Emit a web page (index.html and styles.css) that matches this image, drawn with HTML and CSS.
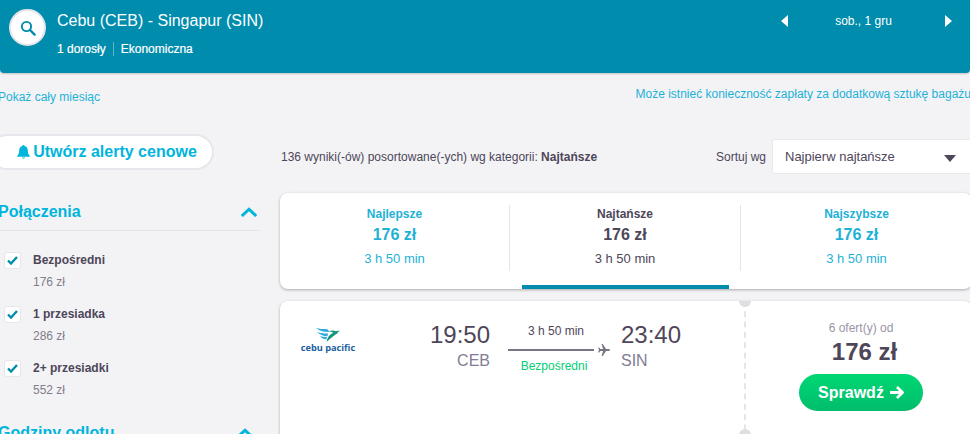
FILE: index.html
```html
<!DOCTYPE html>
<html lang="pl">
<head>
    <meta charset="UTF-8">
    <meta name="viewport" content="width=device-width, initial-scale=1.0">
    <title>Cebu (CEB) - Singapur (SIN)</title>
    <link rel="stylesheet" href="styles.css">
</head>
<body>
    <header class="topbar">
        <button class="search-btn" aria-label="Szukaj">
            <svg width="16" height="16" viewBox="0 0 16 16" fill="none" stroke="#008cad" stroke-width="1.9">
                <circle cx="6.5" cy="6.5" r="4.6"/>
                <path d="M10 10l4.6 4.6" stroke-width="2.4" stroke-linecap="round"/>
            </svg>
        </button>
        <div class="route">
            <div class="route-title">Cebu (CEB) - Singapur (SIN)</div>
            <div class="route-sub"><span>1 dorosły</span><span class="route-class">Ekonomiczna</span></div>
        </div>
        <div class="date-nav">
            <svg width="7" height="12" viewBox="0 0 7 12"><path d="M7 0v12L0 6z" fill="#fff"/></svg>
            <span class="date-label">sob., 1 gru</span>
            <svg width="7" height="12" viewBox="0 0 7 12"><path d="M0 0v12l7-6z" fill="#fff"/></svg>
        </div>
    </header>

    <div class="links">
        <a class="link-month">Pokaż cały miesiąc</a>
        <a class="link-bag">Może istnieć konieczność zapłaty za dodatkową sztukę bagażu</a>
    </div>

    <div class="layout">
        <aside class="sidebar">
            <button class="alert-btn">
                <svg width="13" height="14" viewBox="0 0 13 14" fill="#00b5dc">
                    <path d="M6.5 0C5.8 0 5.4.5 5.4 1.1 3.4 1.6 2.2 3.2 2.2 5.3c0 3-.7 4.3-2 5.500v.9h12.600v-.9c-1.300-1.200-2-2.500-2-5.500 0-2.100-1.200-3.700-3.200-4.200C7.600.5 7.200 0 6.500 0z"/>
                    <path d="M4.800 12.400a1.800 1.600 0 0 0 3.400 0z"/>
                </svg>
                Utwórz alerty cenowe
            </button>

            <div class="filter-head">
                <span class="filter-title">Połączenia</span>
                <svg width="16" height="10" viewBox="0 0 16 10" fill="none" stroke="#00b5dc" stroke-width="3"><path d="M.8 9L8 2.200 15.200 9"/></svg>
            </div>
            <div class="filter-item">
                <span class="check"><svg width="11" height="9" viewBox="0 0 11 9" fill="none" stroke="#008cad" stroke-width="2.400"><path d="M1 4.500l3 3L10 1"/></svg></span>
                <div><div class="filter-name">Bezpośredni</div><div class="filter-price">176 zł</div></div>
            </div>
            <div class="filter-item">
                <span class="check"><svg width="11" height="9" viewBox="0 0 11 9" fill="none" stroke="#008cad" stroke-width="2.400"><path d="M1 4.500l3 3L10 1"/></svg></span>
                <div><div class="filter-name">1 przesiadka</div><div class="filter-price">286 zł</div></div>
            </div>
            <div class="filter-item">
                <span class="check"><svg width="11" height="9" viewBox="0 0 11 9" fill="none" stroke="#008cad" stroke-width="2.400"><path d="M1 4.500l3 3L10 1"/></svg></span>
                <div><div class="filter-name">2+ przesiadki</div><div class="filter-price">552 zł</div></div>
            </div>

            <div class="filter-head filter-next">
                <span class="filter-title">Godziny odlotu</span>
                <svg width="16" height="10" viewBox="0 0 16 10" fill="none" stroke="#00b5dc" stroke-width="3"><path d="M.8 9L8 2.200 15.200 9"/></svg>
            </div>
        </aside>

        <main class="results">
            <div class="sort-row">
                <div class="sort-info">136 wyniki(-ów) posortowane(-ych) wg kategorii: <b>Najtańsze</b></div>
                <div class="sort-by">Sortuj wg</div>
                <div class="sort-select">
                    Najpierw najtańsze
                    <span class="caret"></span>
                </div>
            </div>

            <div class="tabs">
                <div class="tab tab-blue tab-first">
                    <div class="tab-name">Najlepsze</div>
                    <div class="tab-price">176 zł</div>
                    <div class="tab-time">3 h 50 min</div>
                </div>
                <div class="tab tab-active">
                    <div class="tab-name">Najtańsze</div>
                    <div class="tab-price">176 zł</div>
                    <div class="tab-time">3 h 50 min</div>
                </div>
                <div class="tab tab-blue">
                    <div class="tab-name">Najszybsze</div>
                    <div class="tab-price">176 zł</div>
                    <div class="tab-time">3 h 50 min</div>
                </div>
            </div>

            <div class="flight">
                <div class="flight-info">
                    <div class="airline">
                        <svg width="24" height="14" viewBox="0 0 24 14">
                            <path d="M0 0c3 .8 7 1.200 11.500 1.200L13.500 4C8.500 4.300 3 3 0 0zM1 4c3 1 7 1.500 11 1.500l-.5 2.700C7.500 8.300 3.500 6.500 1 4zM4 8.300c2.300.6 4.700.9 7 .8l-.8 2.400C8 11.300 5.500 10 4 8.300z" fill="#2eaade"/>
                            <path d="M10.500 14c.6-4.500 3.200-7.800 6.800-9.300-1.300-.9-3-1.400-4.800-1.500 2.800-1 5.800-.9 7.500.1 1-.7 2.500-.8 4-.2-1.200.4-2 1-2.500 2.100C18 7.500 14 10.500 10.500 14z" fill="#12957f"/>
                        </svg>
                        <span class="airline-name">cebu pacific</span>
                    </div>
                    <div class="stop-col stop-from">
                        <div class="stop-time">19:50</div>
                        <div class="stop-code">CEB</div>
                    </div>
                    <div class="path">
                        <div class="path-time">3 h 50 min</div>
                        <div class="path-line">
                            <span class="line"></span>
                            <svg width="12" height="12" viewBox="0 0 12 12" fill="#7a7585"><path d="M12 6c0-.6-.8-1-1.500-1H8L4.800 0H3.600l1.500 5H2.400L1.200 3.500H.2L1 6 .2 8.500h1L2.400 7h2.700l-1.500 5h1.200L8 7h2.500C11.200 7 12 6.600 12 6z"/></svg>
                        </div>
                        <div class="path-stops">Bezpośredni</div>
                    </div>
                    <div class="stop-col">
                        <div class="stop-time">23:40</div>
                        <div class="stop-code">SIN</div>
                    </div>
                </div>
                <div class="offer">
                    <span class="notch notch-top"></span>
                    <span class="notch notch-bottom"></span>
                    <div class="offer-count">6 ofert(y) od</div>
                    <div class="offer-price">176 zł</div>
                    <button class="check-btn">Sprawdź
                        <svg width="14" height="13" viewBox="0 0 14 13" fill="none" stroke="#fff" stroke-width="2.800"><path d="M0 6.500h12M7 1l5.500 5.500L7 12"/></svg>
                    </button>
                </div>
            </div>
        </main>
    </div>
</body>
</html>
```

FILE: styles.css
```css
html, body {
    height: 434px;
    overflow: hidden;
}
body {
    font-family: "Liberation Sans", Arial, sans-serif;
    background-color: #f3f3f6;
    color: #4e4659;
    margin: 0;
    padding: 0;
    font-size: 12px;
}
button {
    font-family: inherit;
    border: none;
    padding: 0;
}

/* top bar */
.topbar {
    display: flex;
    height: 73px;
    background-color: #008cad;
    border-radius: 0 0 4px 4px;
    box-shadow: 0 1px 2px rgba(0, 0, 0, 0.2);
    color: #fff;
}
.search-btn {
    display: flex;
    align-items: center;
    justify-content: center;
    width: 37px;
    height: 37px;
    margin: 9px 0 0 9px;
    background-color: #fff;
    border: 2px solid #e4e4ea;
    border-radius: 50%;
}
.route {
    margin-left: 12px;
    padding-top: 11px;
}
.route-title {
    font-size: 16px;
    line-height: 19px;
    margin-left: -1px;
}
.route-sub {
    display: flex;
    align-items: center;
    margin-top: 12px;
    margin-left: -1px;
    font-size: 12px;
    font-weight: 500;
    line-height: 14px;
    -webkit-text-stroke: 0.2px #fff;
}
.route-class {
    margin-left: 7px;
    padding-left: 7px;
    border-left: 1px solid #5fb5ca;
}
.date-nav {
    display: flex;
    align-items: center;
    height: 12px;
    margin: 15px 0 0 auto;
    padding-right: 18px;
}
.date-label {
    width: 59px;
    margin: 0 52px 0 46px;
    text-align: center;
    font-size: 12px;
}

/* links under the bar */
.links {
    display: flex;
    justify-content: space-between;
    height: 61px;
    color: #1eb1d6;
    font-size: 12px;
}
.link-month {
    margin: 17px 0 0 -2px;
}
.link-bag {
    margin: 14px -1px 0 0;
    white-space: nowrap;
}

/* columns */
.layout {
    display: flex;
    width: 1000px;
}
.sidebar {
    width: 260px;
    flex: none;
}
.results {
    width: 700px;
    margin-left: 20px;
    padding-top: 5px;
    flex: none;
}

.alert-btn {
    display: flex;
    align-items: center;
    justify-content: center;
    gap: 3px;
    width: 225px;
    height: 36px;
    margin-left: -11px;
    padding-left: 11px;
    background-color: #fff;
    border: 2px solid #e6e6ec;
    border-radius: 18px;
    color: #00b5dc;
    font-size: 16px;
    font-weight: bold;
}

/* filters */
.filter-head {
    display: flex;
    align-items: center;
    justify-content: space-between;
    height: 37px;
    margin-top: 23px;
    margin-left: -2px;
    padding-right: 3px;
    border-bottom: 1px solid #e4e4e9;
}
.filter-title {
    color: #00b5dc;
    font-size: 16px;
    font-weight: bold;
}
.filter-next {
    margin-top: 21px;
    border: none;
    padding-right: 7px;
}
.filter-item {
    display: flex;
    margin-top: 21px;
    height: 33px;
}
.check {
    display: flex;
    align-items: center;
    justify-content: center;
    box-sizing: border-box;
    flex: none;
    width: 17px;
    height: 17px;
    margin-left: 4px;
    background-color: #fff;
    border: 1px solid #e6e6ec;
    border-radius: 3px;
}
.filter-name {
    margin-left: 12px;
    font-weight: bold;
    line-height: 16px;
}
.filter-price {
    margin: 6px 0 0 12px;
    color: #827d8c;
    line-height: 16px;
}

/* sort row */
.sort-row {
    display: flex;
    align-items: center;
    height: 35px;
}
.sort-info {
    width: 435px;
    margin-left: 1px;
    font-size: 12px;
}
.sort-by {
    width: 56px;
    font-size: 12px;
}
.sort-select {
    position: relative;
    box-sizing: border-box;
    width: 208px;
    height: 35px;
    padding-left: 12px;
    background-color: #fff;
    border: 1px solid #e8e8ed;
    border-radius: 3px;
    font-size: 13px;
    line-height: 33px;
}
.caret {
    position: absolute;
    left: 171px;
    top: 15px;
    border-left: 6.5px solid transparent;
    border-right: 6.5px solid transparent;
    border-top: 7px solid #4e4659;
}

/* tabs */
.tabs {
    display: flex;
    width: 692px;
    height: 96px;
    margin-top: 19px;
    background-color: #fff;
    border-radius: 8px;
    box-shadow: 0 1px 3px rgba(0, 0, 0, 0.3);
}
.tab {
    position: relative;
    width: 231px;
    text-align: center;
    padding-top: 14px;
}
.tab-first {
    width: 229px;
}
.tab-name {
    font-weight: bold;
    line-height: 14px;
}
.tab-price {
    margin-top: 4px;
    font-size: 16px;
    font-weight: bold;
    line-height: 19px;
}
.tab-time {
    margin-top: 7px;
    font-size: 13px;
    line-height: 15px;
}
.tab-blue {
    color: #1eb1d6;
}
.tab-active {
    width: 232px;
    color: #4e4659;
}
.tab-active::before,
.tab-active::after {
    content: "";
    position: absolute;
}
.tab-active::before {
    left: 0;
    right: 0;
    top: 12px;
    height: 66px;
    border-left: 1px solid #e4e4e9;
    border-right: 1px solid #e4e4e9;
}
.tab-active::after {
    left: 13px;
    right: 12px;
    bottom: 0;
    height: 4px;
    background-color: #008cad;
}

/* flight card */
.flight {
    display: flex;
    width: 692px;
    height: 150px;
    margin-top: 12px;
    background-color: #fff;
    border-radius: 8px;
    box-shadow: 0 1px 3px rgba(0, 0, 0, 0.3);
}
.flight-info {
    display: flex;
    width: 464px;
    flex: none;
    padding-top: 20px;
}
.airline {
    display: flex;
    flex-direction: column;
    align-items: center;
    width: 56px;
    margin-left: 20px;
    margin-top: 7px;
}
.airline-name {
    color: #1b5f9e;
    font-family: "Open Sans", sans-serif;
    font-size: 9.2px;
    font-weight: bold;
    line-height: 11px;
    white-space: nowrap;
}
.stop-col {
    width: 70px;
}
.stop-from {
    margin-left: 64px;
    text-align: right;
}
.stop-time {
    font-size: 24px;
    line-height: 28px;
}
.stop-code {
    margin-top: 2px;
    color: #827d94;
    font-size: 16px;
    line-height: 19px;
}
.path {
    width: 102px;
    margin: 3px 11px 0 18px;
    text-align: center;
}
.path-time {
    padding-right: 6px;
    line-height: 14px;
}
.path-line {
    display: flex;
    align-items: center;
    gap: 4px;
    margin-top: 6px;
}
.line {
    flex: 1;
    height: 2px;
    background-color: #7a7585;
}
.path-stops {
    margin-top: 3px;
    padding-right: 10px;
    color: #00cf75;
    line-height: 14px;
}
.offer {
    position: relative;
    flex: 1;
    display: flex;
    flex-direction: column;
    align-items: center;
    padding-top: 20px;
    padding-left: 4px;
    border-left: 2px dashed #e4e4ea;
}
.notch {
    position: absolute;
    left: -7px;
    width: 12px;
    background-color: #dedee3;
}
.notch-top {
    top: 0;
    height: 6px;
    border-radius: 0 0 6px 6px;
}
.notch-bottom {
    top: 128px;
    height: 12px;
    border-radius: 50%;
}
.offer-count {
    color: #9a95a5;
    line-height: 14px;
}
.offer-price {
    margin-top: 3px;
    margin-left: 7px;
    font-size: 24px;
    font-weight: bold;
    line-height: 28px;
}
.check-btn {
    display: flex;
    align-items: center;
    justify-content: center;
    gap: 6px;
    width: 124px;
    height: 37px;
    margin-top: 8px;
    background: linear-gradient(#00d773, #00bd6c);
    border-radius: 19px;
    color: #fff;
    font-size: 16px;
    font-weight: bold;
}
```
